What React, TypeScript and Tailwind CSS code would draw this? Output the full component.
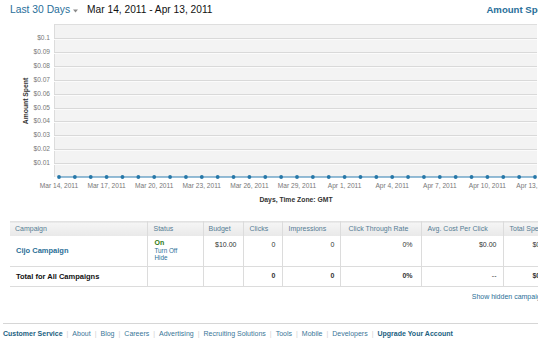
import React from 'react';

const LINK = '#2a6f97';

const yTicks = ['$0.01', '$0.02', '$0.03', '$0.04', '$0.05', '$0.06', '$0.07', '$0.08', '$0.09', '$0.1'];
const xLabels = ['Mar 14, 2011', 'Mar 17, 2011', 'Mar 20, 2011', 'Mar 23, 2011', 'Mar 26, 2011', 'Mar 29, 2011', 'Apr 1, 2011', 'Apr 4, 2011', 'Apr 7, 2011', 'Apr 10, 2011', 'Apr 13, 2011'];

const PLOT_L = 54;
const PLOT_R = 537;
const PLOT_T = 24;
const BASE = 177;
const STEP_Y = 13.9;
const X0 = 59;
const STEP_X = 15.867;

function Chart() {
  const pts = Array.from({ length: 31 }, (_, i) => X0 + i * STEP_X);
  return (
    <svg width="550" height="190" viewBox="0 20 550 190" className="block" style={{ fontFamily: '"Liberation Sans", Arial, sans-serif' }}>
      <rect x={PLOT_L} y={PLOT_T} width={PLOT_R - PLOT_L} height={BASE - PLOT_T} fill="#f3f3f3" />
      <line x1={PLOT_L} y1={PLOT_T + 0.5} x2={PLOT_R} y2={PLOT_T + 0.5} stroke="#dedede" />
      <line x1={PLOT_L + 0.5} y1={PLOT_T} x2={PLOT_L + 0.5} y2={BASE} stroke="#dcdcdc" />
      {yTicks.map((t, k) => {
        const y = Math.round(BASE - (k + 1) * STEP_Y) + 0.5;
        return (
          <g key={t}>
            <line x1={PLOT_L} y1={y} x2={PLOT_R} y2={y} stroke="#d9d9d9" />
            <line x1={PLOT_L} y1={y + 1} x2={PLOT_R} y2={y + 1} stroke="#fbfbfb" />
            <text x={50} y={y} textAnchor="end" dominantBaseline="middle" fontSize="6.6" fill="#777">{t}</text>
          </g>
        );
      })}
      <line x1={pts[0]} y1={BASE} x2={pts[30]} y2={BASE} stroke="#2d7db0" strokeWidth="1" />
      {pts.map((x, i) => (
        <circle key={i} cx={x} cy={BASE} r="1.9" fill="#2677a8" />
      ))}
      {xLabels.map((l, i) => (
        <text key={l} x={X0 + i * 3 * STEP_X} y={186.5} textAnchor="middle" dominantBaseline="middle" fontSize="6.6" fill="#777">{l}</text>
      ))}
      <text x={0} y={0} transform="translate(26 101) rotate(-90)" textAnchor="middle" dominantBaseline="middle" fontSize="6.8" fontWeight="bold" fill="#333">Amount Spent</text>
      <text x={296} y={200.5} textAnchor="middle" dominantBaseline="middle" fontSize="6.8" fontWeight="bold" fill="#333">Days, Time Zone: GMT</text>
    </svg>
  );
}

const cols = [137, 56, 40, 39, 58, 81, 82, 53];

const footerLinks = ['Customer Service', 'About', 'Blog', 'Careers', 'Advertising', 'Recruiting Solutions', 'Tools', 'Mobile', 'Developers', 'Upgrade Your Account'];

export default function App() {
  return (
    <div className="w-[550px] h-[350px] bg-white overflow-hidden" style={{ fontFamily: '"Liberation Sans", Arial, sans-serif' }}>
      <div className="w-[538px] h-[350px] overflow-hidden">
        <div className="w-[552px] h-[20px] flex items-center pl-[10px]">
          <span className="text-[10.3px] text-[#2a6f9a] leading-none">Last 30 Days</span>
          <svg width="5" height="4" viewBox="0 0 5 4" className="ml-[3px] mt-[1px]">
            <path d="M0 0.5 L5 0.5 L2.5 3.5 Z" fill="#8a8a8a" />
          </svg>
          <span className="ml-[9px] text-[10.2px] text-[#111] leading-none">Mar 14, 2011 - Apr 13, 2011</span>
          <span className="ml-auto text-[9.6px] font-bold text-[#2a6f9a] leading-none whitespace-nowrap">Amount Spent</span>
        </div>

        <Chart />

        <table className="mt-[11px] ml-[10px] border-collapse table-fixed text-[7px] text-[#333]" style={{ width: 546 }}>
          <colgroup>
            {cols.map((w, i) => <col key={i} style={{ width: w }} />)}
          </colgroup>
          <thead>
            <tr className="h-[14px] bg-gradient-to-b from-[#f5f5f5] to-[#e9e9e9] border-t border-[#e2e2e2] text-[#557c94]">
              <th className="font-normal text-left px-[5px] whitespace-nowrap">Campaign</th>
              <th className="font-normal text-left px-[6px] border-l border-[#dcdcdc] whitespace-nowrap">Status</th>
              <th className="font-normal text-left px-[5px] border-l border-[#dcdcdc] whitespace-nowrap">Budget</th>
              <th className="font-normal text-left px-[6px] border-l border-[#dcdcdc] whitespace-nowrap">Clicks</th>
              <th className="font-normal text-left px-[6px] border-l border-[#dcdcdc] whitespace-nowrap">Impressions</th>
              <th className="font-normal text-left px-[8px] border-l border-[#dcdcdc] whitespace-nowrap">Click Through Rate</th>
              <th className="font-normal text-left px-[6px] border-l border-[#dcdcdc] whitespace-nowrap">Avg. Cost Per Click</th>
              <th className="font-normal text-left px-[6px] border-l border-[#dcdcdc] whitespace-nowrap overflow-hidden">Total Spent</th>
            </tr>
          </thead>
          <tbody>
            <tr className="h-[31px] border-b border-[#dcdcdc]">
              <td className="pl-[6px] align-middle font-bold text-[7.5px] whitespace-nowrap" style={{ color: LINK }}>Cijo Campaign</td>
              <td className="pl-[7px] align-top pt-[3px] border-l border-[#dcdcdc] leading-[7.5px]">
                <div className="font-bold text-[#2e7a12] text-[7px] leading-[8px]">On</div>
                <div className="text-[6.3px]" style={{ color: LINK }}>Turn Off</div>
                <div className="text-[6.3px]" style={{ color: LINK }}>Hide</div>
              </td>
              <td className="text-right pr-[6px] align-top pt-[4px] border-l border-[#dcdcdc]">$10.00</td>
              <td className="text-right pr-[6px] align-top pt-[4px] border-l border-[#dcdcdc]">0</td>
              <td className="text-right pr-[5px] align-top pt-[4px] border-l border-[#dcdcdc]">0</td>
              <td className="text-right pr-[8px] align-top pt-[4px] border-l border-[#dcdcdc]">0%</td>
              <td className="text-right pr-[6px] align-top pt-[4px] border-l border-[#dcdcdc]">$0.00</td>
              <td className="text-right pr-[6px] align-top pt-[4px] border-l border-[#dcdcdc]">$0.00</td>
            </tr>
            <tr className="h-[20px] border-b border-[#dcdcdc] font-bold">
              <td className="pl-[6px] align-middle text-[7.5px] text-[#111] whitespace-nowrap">Total for All Campaigns</td>
              <td className="border-l border-[#dcdcdc]"></td>
              <td className="border-l border-[#dcdcdc]"></td>
              <td className="text-right pr-[6px] align-middle border-l border-[#dcdcdc]">0</td>
              <td className="text-right pr-[5px] align-middle border-l border-[#dcdcdc]">0</td>
              <td className="text-right pr-[8px] align-middle border-l border-[#dcdcdc]">0%</td>
              <td className="text-right pr-[6px] align-middle border-l border-[#dcdcdc] font-normal">--</td>
              <td className="text-right pr-[6px] align-middle border-l border-[#dcdcdc]">$0.00</td>
            </tr>
          </tbody>
        </table>

        <div className="w-[548px] mt-[5px] h-[9px] leading-[9px] text-right text-[7px] whitespace-nowrap" style={{ color: LINK }}>
          Show hidden campaigns
        </div>

        <div className="mt-[22px] ml-[3px] w-[535px] border-t border-[#d6d6d6] pt-[6px] flex items-center text-[7px] leading-[8px] whitespace-nowrap">
          {footerLinks.map((l, i) => (
            <React.Fragment key={l}>
              {i > 0 && <span className="mx-[4px] text-[#cfcfcf]">|</span>}
              <span className={i === 0 || i === footerLinks.length - 1 ? 'font-bold text-[#22617f]' : 'text-[#3a7698]'}>{l}</span>
            </React.Fragment>
          ))}
        </div>
      </div>
    </div>
  );
}
